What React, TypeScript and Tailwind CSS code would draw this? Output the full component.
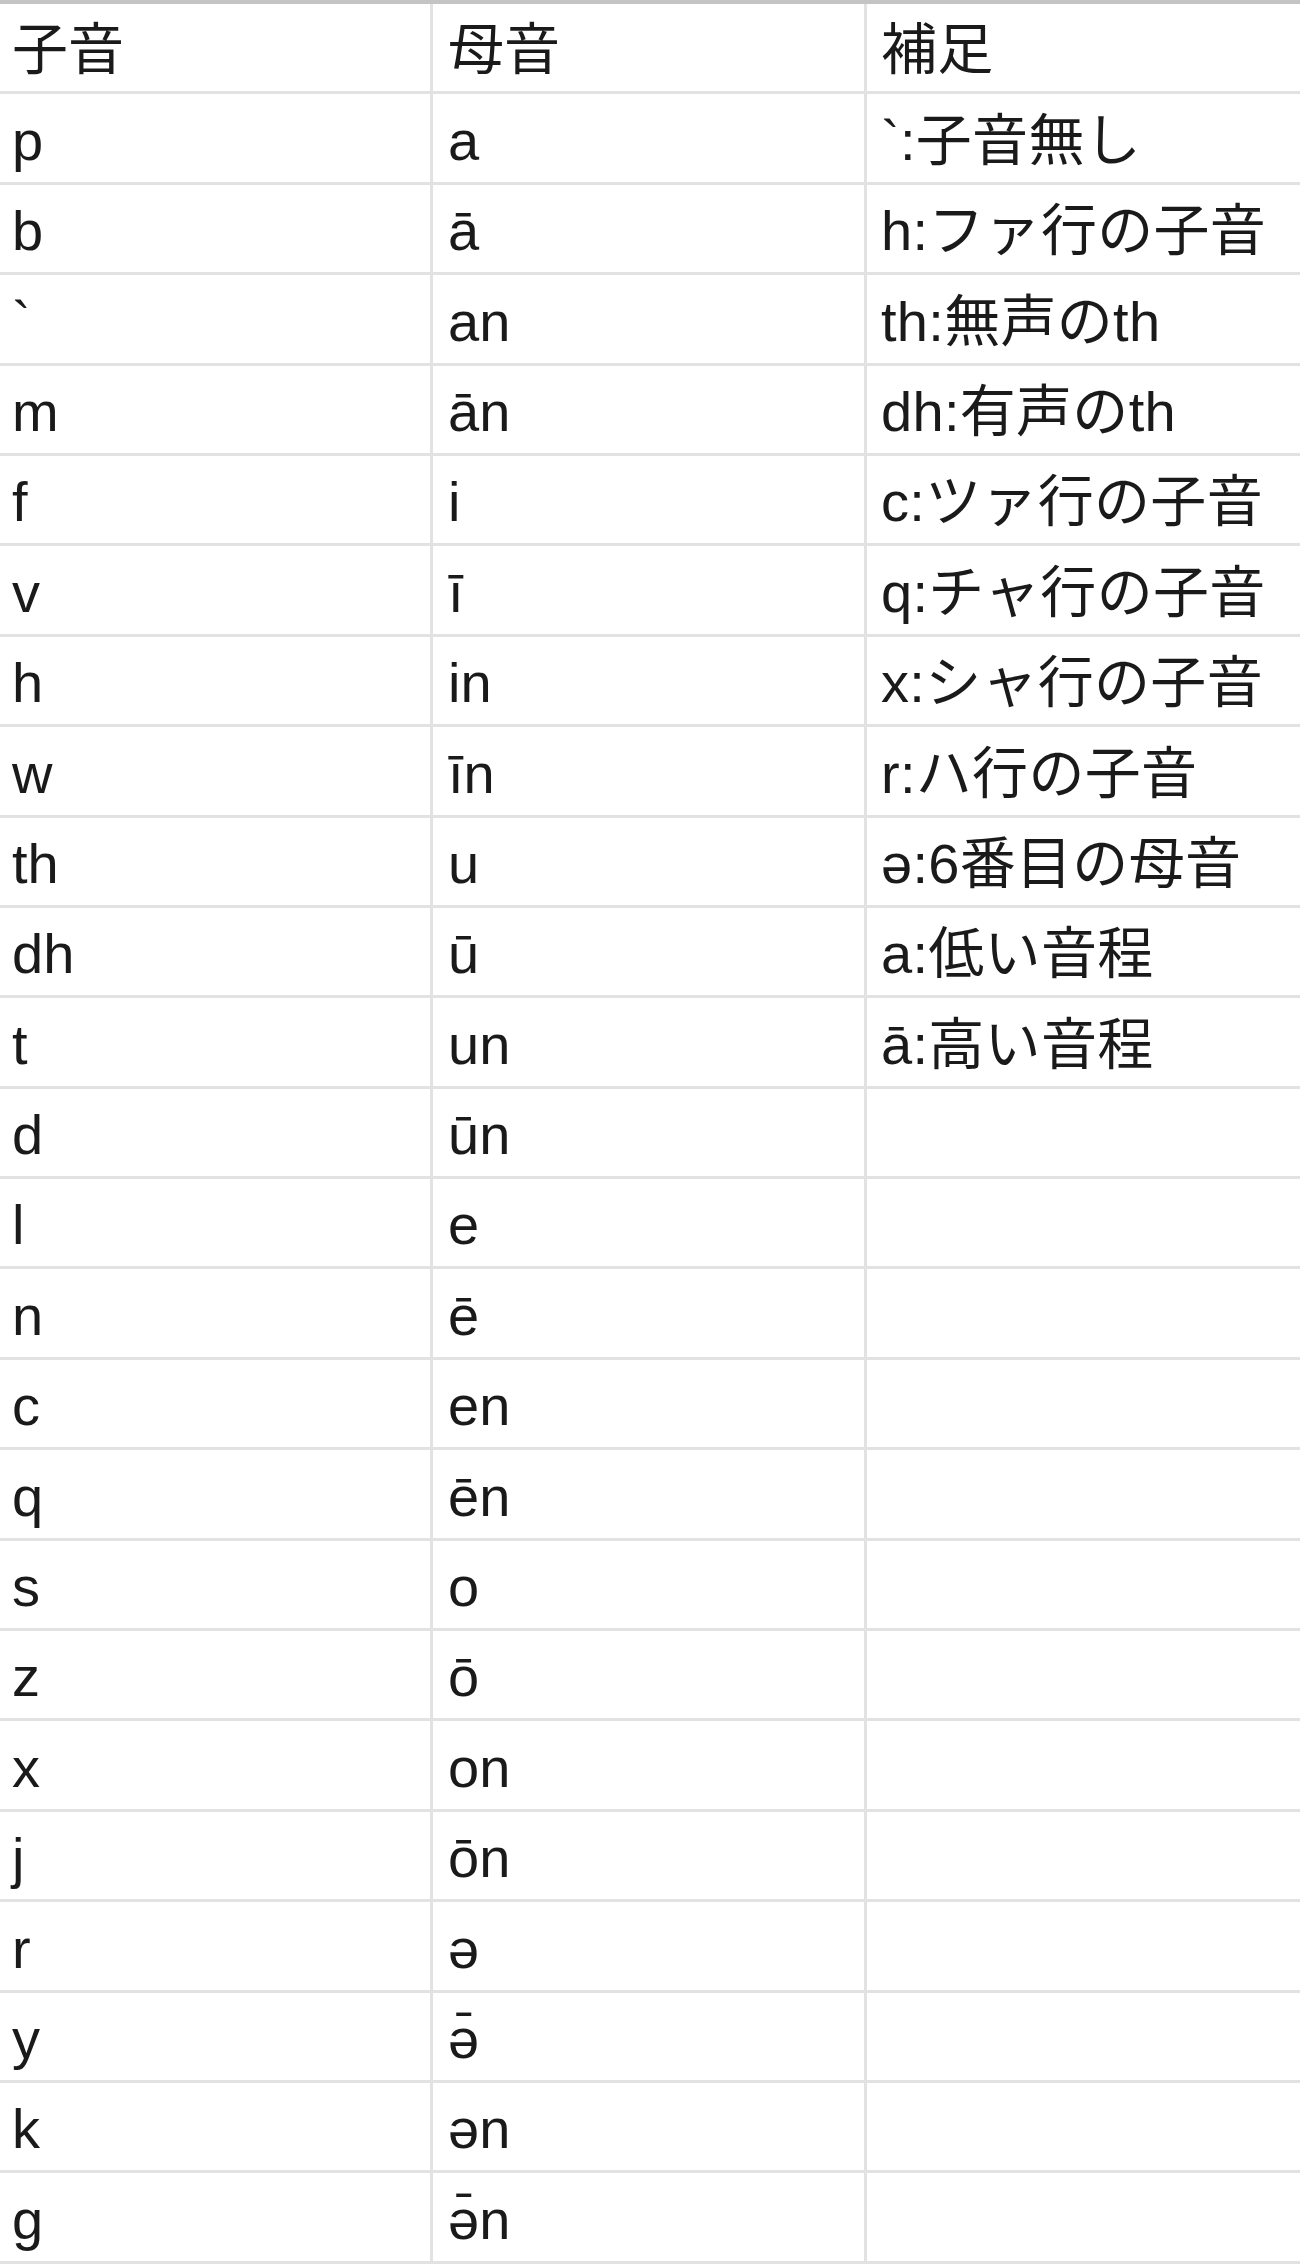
const consonants = ['p', 'b', '`', 'm', 'f', 'v', 'h', 'w', 'th', 'dh', 't', 'd', 'l', 'n', 'c', 'q', 's', 'z', 'x', 'j', 'r', 'y', 'k', 'g'];
const vowels = ['a', 'ā', 'an', 'ān', 'i', 'ī', 'in', 'īn', 'u', 'ū', 'un', 'ūn', 'e', 'ē', 'en', 'ēn', 'o', 'ō', 'on', 'ōn', 'ə', 'ə̄', 'ən', 'ə̄n'];
const notes = [
  '`:子音無し',
  'h:ファ行の子音',
  'th:無声のth',
  'dh:有声のth',
  'c:ツァ行の子音',
  'q:チャ行の子音',
  'x:シャ行の子音',
  'r:ハ行の子音',
  'ə:6番目の母音',
  'a:低い音程',
  'ā:高い音程',
];

function Row({ cells }: { cells: string[] }) {
  return (
    <div className="grid grid-cols-[433px_434px_1fr] h-[90.4px] border-b-[3px] border-[#e2e2e2]">
      <div className="flex items-end pl-[12px] pb-[13px] border-r-[3px] border-[#e2e2e2] whitespace-nowrap">{cells[0]}</div>
      <div className="flex items-end pl-[15px] pb-[13px] border-r-[3px] border-[#e2e2e2] whitespace-nowrap">{cells[1]}</div>
      <div className="flex items-end pl-[14px] pb-[13px] whitespace-nowrap overflow-hidden tracking-[0.3px]">{cells[2]}</div>
    </div>
  );
}

export default function App() {
  return (
    <div
      className="w-[1300px] h-[2264px] bg-white border-t-4 border-[#c4c4c4] text-[56px] leading-none text-[#1a1a1a] overflow-hidden"
      style={{ fontFamily: '"Liberation Sans", Arial, "Noto Sans CJK JP", sans-serif' }}
    >
      <Row cells={['子音', '母音', '補足']} />
      {consonants.map((c, i) => (
        <Row key={i} cells={[c, vowels[i], notes[i] ?? '']} />
      ))}
    </div>
  );
}
